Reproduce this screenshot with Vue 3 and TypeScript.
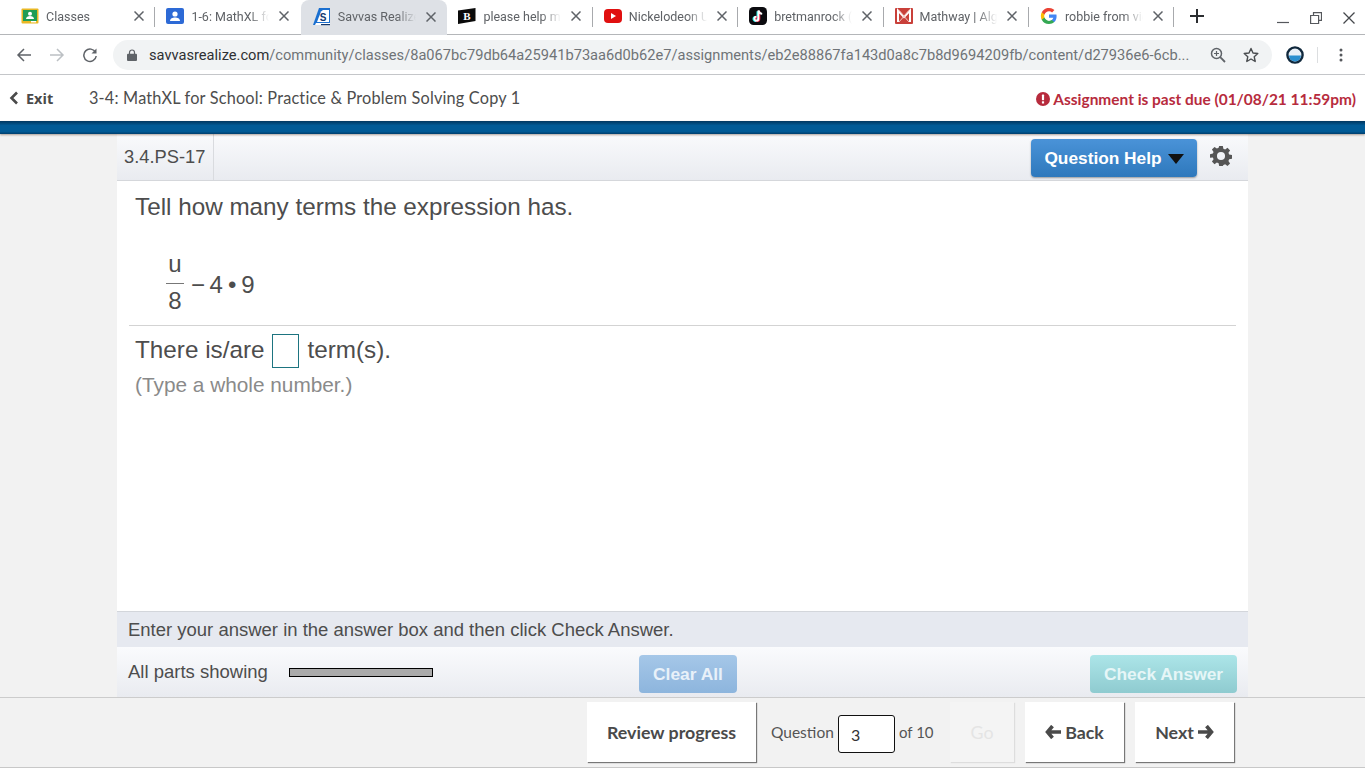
<script setup lang="ts">
interface Tab { title: string; icon: string; active?: boolean; noSep?: boolean }
const tabs: Tab[] = [
  { title: 'Classes', icon: 'classroom' },
  { title: '1-6: MathXL for School', icon: 'contact', noSep: true },
  { title: 'Savvas Realize', icon: 'savvas', active: true, noSep: true },
  { title: 'please help me', icon: 'brainly' },
  { title: 'Nickelodeon Universe', icon: 'youtube' },
  { title: 'bretmanrock (@bret', icon: 'tiktok' },
  { title: 'Mathway | Algebra', icon: 'mathway' },
  { title: 'robbie from victorious', icon: 'google' },
]
</script>

<template>
  <div class="page">
    <div class="tabstrip">
      <div v-for="t in tabs" :key="t.title" class="tab" :class="{ active: t.active, sep: !t.noSep }">
        <svg class="fav" viewBox="0 0 18 18" width="18" height="18">
          <template v-if="t.icon === 'classroom'">
            <rect width="17" height="15" y="1.500" x=".5" rx="1" fill="#e9b824" />
            <rect x="2" y="3" width="14" height="11" fill="#1f9d55" />
            <circle cx="9" cy="6.800" r="2" fill="#fff" />
            <path d="M5 12c0-2 2-3 4-3s4 1 4 3z" fill="#fff" />
            <rect x="10" y="14" width="5" height="1.400" fill="#fff" />
          </template>
          <template v-else-if="t.icon === 'contact'">
            <rect y="1" width="18" height="16" rx="2" fill="#2d6ad6" />
            <circle cx="9" cy="7" r="2.600" fill="#fff" />
            <path d="M4 14c0-2.600 2.600-3.600 5-3.600s5 1 5 3.600z" fill="#fff" />
          </template>
          <template v-else-if="t.icon === 'savvas'">
            <path d="M6 0h11v17H0z" fill="#1a6fd0" />
            <path d="M8 3.500l2-1.500h6v12H4z" fill="#fff" />
            <text x="10" y="13" font-size="10" font-weight="700" text-anchor="middle" fill="#12386e" font-family="Liberation Sans">S</text>
            <path d="M3 15h14v2H2z" fill="#fff" />
            <rect x="8" y="16" width="9" height="1.200" fill="#12386e" />
          </template>
          <template v-else-if="t.icon === 'brainly'">
            <path d="M0 3.500L17.500 1v13L0 17z" fill="#0a0a0a" />
            <text x="9" y="13" font-size="11" font-weight="700" text-anchor="middle" fill="#fff" font-family="Liberation Serif">B</text>
          </template>
          <template v-else-if="t.icon === 'youtube'">
            <rect y="2" width="18" height="14" rx="4" fill="#e01010" />
            <path d="M7 6l5 3-5 3z" fill="#fff" />
          </template>
          <template v-else-if="t.icon === 'tiktok'">
            <rect width="18" height="18" rx="4.500" fill="#0b0b0f" />
            <path d="M8.400 4.300v7.700a2 2 0 1 1-2-2" fill="none" stroke="#25f4ee" stroke-width="1.800" />
            <path d="M10.400 4.300v7.700a2 2 0 1 1-2-2" fill="none" stroke="#fe2c55" stroke-width="1.800" />
            <path d="M9.400 3.500v8.200a2 2 0 1 1-2-2" fill="none" stroke="#fff" stroke-width="1.800" />
            <path d="M9.600 3.500c.3 2 1.600 3.200 3.600 3.400" fill="none" stroke="#fff" stroke-width="1.800" />
          </template>
          <template v-else-if="t.icon === 'mathway'">
            <rect y="1" width="18" height="16" rx="1" fill="#c9403a" />
            <path d="M3 15V3.500L9 10l6-6.500V15" fill="none" stroke="#fff" stroke-width="2" />
            <path d="M4 15L14 3.500M14 15L4 3.500" stroke="#f3c5c0" stroke-width="1" />
          </template>
          <template v-else>
            <path d="M16.600 9.200c0-.6-.1-1.200-.2-1.700H9v3.200h4.300a3.700 3.700 0 0 1-1.600 2.400v2h2.600c1.500-1.400 2.300-3.400 2.300-5.900z" fill="#4285f4" />
            <path d="M9 17c2.200 0 4-.7 5.300-1.900l-2.600-2c-.7.500-1.600.8-2.700.8-2.100 0-3.800-1.400-4.500-3.300H1.800v2.100A8 8 0 0 0 9 17z" fill="#34a853" />
            <path d="M4.500 10.600a4.800 4.800 0 0 1 0-3.200V5.300H1.800a8 8 0 0 0 0 7.400z" fill="#fbbc05" />
            <path d="M9 4.200c1.200 0 2.300.4 3.100 1.200l2.300-2.300A8 8 0 0 0 1.800 5.300l2.700 2.100C5.200 5.500 6.900 4.200 9 4.200z" fill="#ea4335" />
          </template>
        </svg>
        <span class="tab-title">{{ t.title }}</span>
        <svg class="tab-x" viewBox="0 0 10 10" width="10" height="10">
          <path d="M0.500 0.500l9 9M9.500 0.500l-9 9" stroke="#5f6368" stroke-width="1.500" />
        </svg>
      </div>
      <svg class="plus" viewBox="0 0 14 14" width="14" height="14">
        <path d="M7 0v14M0 7h14" stroke="#2b2d30" stroke-width="2" />
      </svg>
      <div class="win">
        <svg viewBox="0 0 12 12" width="12" height="12"><path d="M0 10.500h12" stroke="#55585c" stroke-width="1.200" /></svg>
        <svg viewBox="0 0 12 12" width="12" height="12"><path d="M3.500 3V.600h8v7.800H9M.600 3.500h8v8h-8z" fill="none" stroke="#55585c" stroke-width="1.200" /></svg>
        <svg viewBox="0 0 12 12" width="12" height="12"><path d="M.500.500l11 11M11.500.500l-11 11" stroke="#45484c" stroke-width="1.300" /></svg>
      </div>
    </div>

    <div class="toolbar">
      <svg class="nav-ic" viewBox="0 0 16 16" width="16" height="16"><path d="M15 8H2M8 2L2 8l6 6" fill="none" stroke="#5f6368" stroke-width="1.500" /></svg>
      <svg class="nav-ic" viewBox="0 0 16 16" width="16" height="16"><path d="M1 8h13M8 2l6 6-6 6" fill="none" stroke="#bcc0c4" stroke-width="1.500" /></svg>
      <svg class="nav-ic" viewBox="0 0 16 16" width="16" height="16"><path d="M13.600 5.500A6.200 6.200 0 1 0 14.200 9" fill="none" stroke="#5f6368" stroke-width="1.500" /><path d="M14.500 1.500v5h-5z" fill="#5f6368" /></svg>
      <div class="omnibox">
        <svg class="lock" viewBox="0 0 10 12" width="10" height="12"><path d="M2.500 5V3.500a2.500 2.500 0 0 1 5 0V5" fill="none" stroke="#5f6368" stroke-width="1.200" /><rect y="4.800" width="10" height="7.200" rx="1" fill="#5f6368" /></svg>
        <span class="url"><b>savvasrealize.com</b>/community/classes/8a067bc79db64a25941b73aa6d0b62e7/assignments/eb2e88867fa143d0a8c7b8d9694209fb/content/d27936e6-6cb...</span>
        <svg class="omni-ic" viewBox="0 0 16 16" width="16" height="16"><circle cx="6.500" cy="6.500" r="5" fill="none" stroke="#5f6368" stroke-width="1.500" /><path d="M10.200 10.200L15 15" stroke="#5f6368" stroke-width="1.800" /><path d="M6.500 4v5M4 6.500h5" stroke="#5f6368" stroke-width="1.200" /></svg>
        <svg class="omni-ic star" viewBox="0 0 16 16" width="16" height="16"><path d="M8 1.500l2 4.500 4.800.5-3.600 3.200 1 4.800L8 12l-4.200 2.500 1-4.800L1.200 6.500 6 6z" fill="none" stroke="#4a4d50" stroke-width="1.400" stroke-linejoin="round" /></svg>
      </div>
      <svg class="ext" viewBox="0 0 18 18" width="18" height="18"><circle cx="9" cy="9" r="7.600" fill="#e8f0f8" stroke="#10283c" stroke-width="2.400" /><path d="M3 9.500h12a6 6 0 0 1-12 0z" fill="#2b8fd0" /></svg>
      <span class="tb-sep"></span>
      <svg class="dots" viewBox="0 0 4 14" width="4" height="14"><circle cx="2" cy="2" r="1.500" fill="#55585c" /><circle cx="2" cy="7" r="1.500" fill="#55585c" /><circle cx="2" cy="12" r="1.500" fill="#55585c" /></svg>
    </div>

    <header class="app-head">
      <a class="exit">
        <svg viewBox="0 0 10 14" width="10" height="14"><path d="M8 1.500L2.500 7 8 12.500" fill="none" stroke="#4a4a4a" stroke-width="2.600" /></svg>
        Exit
      </a>
      <span class="assign-title">3-4: MathXL for School: Practice &amp; Problem Solving Copy 1</span>
      <span class="due">
        <svg viewBox="0 0 14 14" width="14" height="14"><circle cx="7" cy="7" r="7" fill="#b72b3d" /><rect x="5.900" y="2.600" width="2.200" height="5.600" rx=".6" fill="#fff" /><rect x="5.900" y="9.200" width="2.200" height="2.200" rx=".5" fill="#fff" /></svg>
        Assignment is past due (01/08/21 11:59pm)
      </span>
    </header>
    <div class="blue-bar"></div>

    <main class="main">
      <section class="panel">
        <div class="q-top">
          <div class="q-id">3.4.PS-17</div>
          <div class="q-tools">
            <button class="help">Question Help <span class="caret"></span></button>
            <svg class="gear" viewBox="0 0 24 24" width="22" height="22">
              <path fill="#555" fill-rule="evenodd" d="M10 1h4l.6 3.100 1.900.8L19.100 3.100l2.800 2.800-1.800 2.600.8 1.900 3.100.6v4l-3.100.6-.8 1.900 1.800 2.600-2.800 2.800-2.600-1.800-1.900.8L14 23h-4l-.6-3.100-1.900-.8-2.600 1.800-2.800-2.800 1.800-2.600-.8-1.900L0 14v-4l3.100-.6.8-1.900L2.100 4.900l2.800-2.800 2.600 1.800 1.900-.8zM12 7.600a4.400 4.400 0 1 0 0 8.800 4.400 4.400 0 0 0 0-8.800z" />
            </svg>
          </div>
        </div>

        <div class="q-body">
          <p class="prompt">Tell how many terms the expression has.</p>
          <div class="expr">
            <span class="frac"><span class="num">u</span><span class="den">8</span></span>
            <span class="rest"><span class="minus">−</span><span class="four">4</span><span class="dot">•</span>9</span>
          </div>
        </div>
        <hr class="rule" />
        <div class="answer">
          <p class="ans-line">There is/are <span class="box"></span> term(s).</p>
          <p class="hint">(Type a whole number.)</p>
        </div>

        <div class="instr">Enter your answer in the answer box and then click Check Answer.</div>
        <div class="actions">
          <span class="parts">All parts showing</span>
          <span class="progress"></span>
          <button class="clear">Clear All</button>
          <button class="check">Check Answer</button>
        </div>
      </section>
    </main>

    <footer class="foot">
      <button class="fbtn review">Review progress</button>
      <span class="q-label">Question</span>
      <span class="q-input">3</span>
      <span class="q-of">of 10</span>
      <button class="fbtn go">Go</button>
      <button class="fbtn back">
        <svg viewBox="0 0 16 14" width="16" height="14"><path d="M7.500 1L2.500 7l5 6M3 7h13" fill="none" stroke="#4a4a4a" stroke-width="3.600" /></svg>Back
      </button>
      <button class="fbtn next">Next<svg viewBox="0 0 16 14" width="16" height="14"><path d="M8.500 1l5 6-5 6M13 7H0" fill="none" stroke="#4a4a4a" stroke-width="3.600" /></svg></button>
    </footer>
  </div>
</template>

<style>
html, body { margin: 0; overflow: hidden; background: #f2f2f2; }
</style>

<style scoped>
.page { height: 768px; width: 1365px; display: flex; flex-direction: column; overflow: hidden; font-family: "Liberation Sans", Arial, sans-serif; }
p { margin: 0; }
button { font: inherit; border: 0; cursor: default; }

.tabstrip { height: 34px; flex: none; display: flex; align-items: stretch; background: #fff; border-bottom: 1px solid #b4b6b9; padding-left: 10px; }
.tab { width: 145.400px; flex: none; box-sizing: border-box; position: relative; display: flex; align-items: center; padding: 0 11.500px 2px 11px; font: 12.500px Roboto, sans-serif; color: #5f6266; }
.tab.sep::after { content: ""; position: absolute; right: 0; top: 7px; height: 20px; width: 1px; background: #a8aaad; }
.tab.active { background: #dee1e6; border-radius: 8px 8px 0 0; width: 146.600px; padding-left: 12px; margin-bottom: -1px; }
.fav { flex: none; margin-right: 7px; }
.tab-title { flex: 1; min-width: 0; white-space: nowrap; overflow: hidden; -webkit-mask-image: linear-gradient(90deg, #000 75%, transparent 100%); mask-image: linear-gradient(90deg, #000 75%, transparent 100%); }
.tab-x { flex: none; margin-left: 10px; }
.plus { align-self: center; margin: 0 0 2px 16px; }
.win { margin-left: auto; display: flex; align-items: center; gap: 21px; padding: 2px 10px 0 0; }
.win svg { display: block; }

.toolbar { height: 40px; flex: none; box-sizing: border-box; display: flex; align-items: center; background: #fff; border-bottom: 1px solid #c4c6c9; padding: 0 16px; }
.nav-ic { flex: none; margin-right: 17px; }
.nav-ic:nth-child(3) { margin-right: 15px; }
.omnibox { width: 1159px; height: 30px; flex: none; box-sizing: border-box; background: #f1f3f4; border-radius: 15px; display: flex; align-items: center; padding: 0 13px 0 14px; }
.lock { flex: none; margin-right: 12px; }
.url { flex: 1; min-width: 0; white-space: nowrap; overflow: hidden; font: 14.650px Roboto, sans-serif; color: #6f7377; }
.url b { font-weight: 400; color: #2e3033; }
.omni-ic { flex: none; margin-left: 17px; }
.omni-ic.star { margin-left: 17px; }
.ext { flex: none; margin-left: 14px; }
.tb-sep { width: 1px; height: 16px; background: #dcdee0; margin: 0 21px 0 13px; flex: none; }
.dots { flex: none; }

.app-head { height: 46px; flex: none; display: flex; align-items: center; background: #fff; padding: 0 9px 0 9px; color: #4a4a4a; }
.exit { display: flex; align-items: center; gap: 7px; width: 80px; font: 700 14.500px "Open Sans", sans-serif; color: #4a4a4a; }
.assign-title { font: 16.300px Lato, sans-serif; color: #4d4d4d; position: relative; top: -1px; letter-spacing: .18px; }
.due { margin-left: auto; display: flex; align-items: center; gap: 3px; font: 700 15.450px Lato, sans-serif; color: #b72b3d; position: relative; top: 1px; }

.blue-bar { height: 13px; flex: none; background: linear-gradient(#00365f 0, #005a96 35%, #005a96 80%, #003f6d 100%); box-shadow: 0 1px 2px rgba(80, 50, 30, .45); position: relative; z-index: 1; }

.main { flex: 1; min-height: 0; display: flex; justify-content: center; background: #f2f2f2; }
.panel { width: 1131px; height: 100%; display: flex; flex-direction: column; background: #fff; }

.q-top { height: 47px; flex: none; box-sizing: border-box; display: flex; background: linear-gradient(#f9fafc, #e9ebf0); border-bottom: 1px solid #d5d7db; }
.q-id { width: 97px; box-sizing: border-box; padding-left: 7px; line-height: 46px; font-size: 18.300px; color: #4d4d4d; border-right: 1px solid #d9dbdf; }
.q-tools { margin-left: auto; display: flex; align-items: flex-start; padding: 5px 16px 0 0; }
.help { width: 166px; height: 38px; box-sizing: border-box; display: flex; align-items: center; justify-content: center; gap: 6px; border-radius: 4px; background: linear-gradient(#4a93d8, #2e78bc); box-shadow: 0 1px 2px rgba(0, 0, 0, .35); color: #fff; font-weight: 700; font-size: 17.300px; }
.caret { width: 0; height: 0; border-left: 8px solid transparent; border-right: 8px solid transparent; border-top: 10px solid #111; margin-top: 2px; }
.gear { margin: 6px 0 0 13px; }

.q-body { padding: 12px 0 0 18px; height: 144px; box-sizing: border-box; flex: none; }
.prompt { font-size: 24.270px; line-height: 28px; color: #4d4d4d; }
.expr { display: flex; align-items: center; margin: 29px 0 0 31px; color: #4d4d4d; font-size: 24px; }
.frac { display: inline-flex; flex-direction: column; align-items: center; width: 18px; }
.num { display: block; width: 100%; text-align: center; border-bottom: 1px solid #777; height: 33px; line-height: 28px; }
.den { display: block; height: 29px; line-height: 34px; }
.rest { margin: 7px 0 0 7px; }
.four { margin-left: 4.500px; }
.dot { margin: 0 5px; }

.rule { margin: 0 12px; height: 1px; border: 0; background: #d3d3d3; flex: none; }
.answer { flex: 1; min-height: 0; padding: 8px 0 0 18px; color: #4d4d4d; font-size: 24.270px; }
.ans-line { display: flex; align-items: center; gap: 8px; height: 34px; box-sizing: border-box; padding-bottom: 2px; }
.box { width: 27px; height: 34px; box-sizing: border-box; margin: 0 0 -2px 0; border: 1px solid #1d7480; background: #fff; display: block; }
.hint { color: #8a8a8a; font-size: 20.800px; line-height: 24px; margin-top: 5px; }

.instr { height: 36px; flex: none; box-sizing: border-box; border-top: 1px solid #d3d6db; background: #e6e9f0; padding-left: 11px; line-height: 35px; font-size: 18.490px; color: #4d4d4d; }
.actions { height: 50px; flex: none; box-sizing: border-box; display: flex; align-items: flex-start; background: linear-gradient(#fafbfd, #e9ebf0); padding: 8px 11px 0 11px; color: #4d4d4d; }
.parts { font-size: 18.500px; line-height: 34px; width: 161px; }
.progress { width: 144px; height: 9px; box-sizing: border-box; margin-top: 13px; background: #aaa; border: 1px solid #000; }
.clear { margin-left: 206px; width: 98px; height: 38px; border-radius: 4px; background: linear-gradient(#a5c7e8, #8db5dd); color: #e8f1f9; font-weight: 700; font-size: 17.400px; padding: 0; }
.check { margin-left: auto; width: 147px; height: 38px; border-radius: 4px; background: linear-gradient(#ace5e8, #8fcbd0); color: #e6f6f7; font-weight: 700; font-size: 17.400px; padding: 0; }

.foot { height: 71px; flex: none; box-sizing: border-box; display: flex; align-items: flex-start; background: #f2f2f2; border-top: 1px solid #ccc; border-bottom: 1px solid #c8c8c8; padding: 4px 0 0 587px; color: #555; }
.fbtn { height: 60px; box-sizing: border-box; background: #fff; box-shadow: 1px 1px 1px #777; color: #4a4a4a; font: 700 17.800px Lato, sans-serif; display: flex; align-items: center; justify-content: center; gap: 4px; padding: 0; }
.review { width: 169px; }
.q-label { margin-left: 15px; width: 63px; white-space: nowrap; font: 15.500px Lato, sans-serif; line-height: 60px; }
.q-input { width: 57px; height: 38px; box-sizing: border-box; margin: 13px 0 0 4px; padding-left: 12px; background: #fff; border: 1px solid #111; border-radius: 3px; font: 16px/38px Lato, sans-serif; color: #333; }
.q-of { margin-left: 4px; width: 35px; white-space: nowrap; font: 15px Lato, sans-serif; line-height: 60px; }
.go { width: 64px; margin-left: 16px; background: #f4f4f4; color: #e4e4e4; box-shadow: 1px 1px 1px #ddd; font-weight: 400; }
.back { width: 99px; margin-left: 11px; }
.next { width: 99px; margin-left: 11px; }
</style>
